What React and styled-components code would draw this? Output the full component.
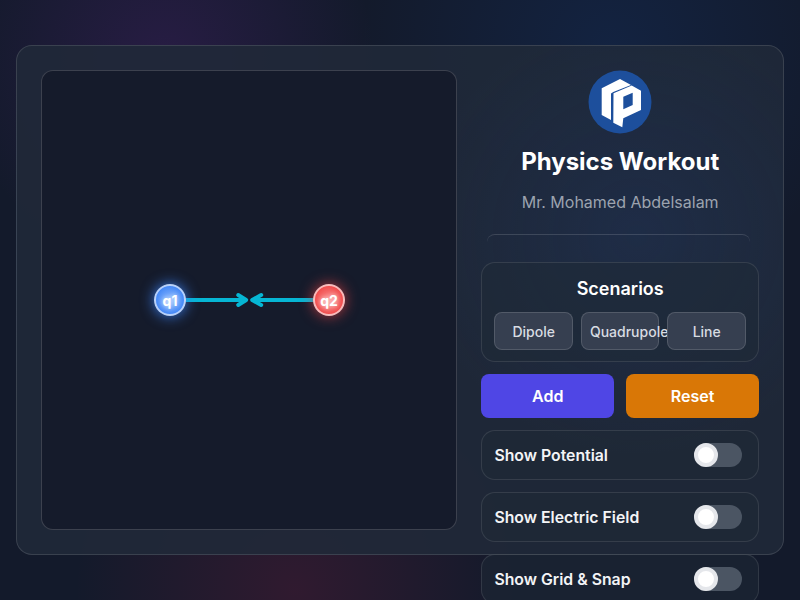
import React from 'react';
import styled, { createGlobalStyle } from 'styled-components';

const Global = createGlobalStyle`
  * { box-sizing: border-box; }
  html, body { margin: 0; height: 100%; overflow: hidden; }
  body {
    font-family: Inter, "Liberation Sans", sans-serif;
    color: #fff;
    background-color: #131a2b;
    background-image:
      radial-gradient(circle 210px at 165px 60px, rgba(140, 40, 190, 0.17), transparent),
      radial-gradient(circle 250px at 610px 50px, rgba(19, 90, 200, 0.14), transparent),
      radial-gradient(circle 220px at 295px 590px, rgba(200, 26, 70, 0.16), transparent);
  }
  #root { height: 100%; }
`;

const Page = styled.div`
  height: 100vh;
  display: flex;
  align-items: center;
  justify-content: center;
  padding: 0 16px;
`;

const Panel = styled.main`
  width: 100%;
  height: 510px;
  display: grid;
  grid-template-columns: 3fr 2fr;
  grid-template-rows: minmax(0, 1fr);
  gap: 24px;
  padding: 24px;
  border: 1px solid rgba(255, 255, 255, 0.12);
  border-radius: 16px;
  background:
    radial-gradient(circle 220px at 620px 190px, rgba(30, 64, 130, 0.2), transparent),
    rgba(32, 41, 56, 0.9);
`;

const Canvas = styled.section`
  position: relative;
  border: 1px solid rgba(255, 255, 255, 0.17);
  border-radius: 12px;
  background: #151b2b;
`;

const ArrowLayer = styled.svg`
  position: absolute;
  left: 0;
  top: 0;
  width: 100%;
  height: 100%;
`;

const Charge = styled.div`
  position: absolute;
  left: ${p => p.$x}px;
  top: ${p => p.$y}px;
  width: 32px;
  height: 32px;
  transform: translate(-50%, -50%);
  display: flex;
  align-items: center;
  justify-content: center;
  border-radius: 50%;
  border: 2px solid rgba(255, 255, 255, 0.62);
  background: ${p => p.$positive
    ? 'radial-gradient(circle at 50% 50%, #fb8f8f, #ef4444 80%)'
    : 'radial-gradient(circle at 50% 50%, #8db9fd, #3b82f6 80%)'};
  box-shadow: 0 0 14px ${p => p.$positive ? 'rgba(239, 68, 68, 0.75)' : 'rgba(59, 130, 246, 0.95)'};
  font-size: 14px;
  font-weight: 700;
  color: #fff;
  text-shadow: 0 0 5px rgba(255, 255, 255, 0.85);
`;

const Sidebar = styled.aside`
  display: flex;
  flex-direction: column;
  gap: 12px;
  min-width: 0;
`;

const Brand = styled.header`
  flex: none;
  display: flex;
  flex-direction: column;
  align-items: center;
  height: 180px;
`;

const Logo = styled.svg`
  flex: none;
  width: 64px;
  height: 64px;
  display: block;
`;

const Title = styled.h1`
  margin: 12px 0 0;
  font-size: 24px;
  line-height: 32px;
  font-weight: 700;
  color: #fff;
`;

const Subtitle = styled.p`
  margin: 12px 0 0;
  font-size: 16px;
  line-height: 24px;
  color: #9ca3af;
`;

const Divider = styled.div`
  align-self: stretch;
  margin: 20px 9px 0 6px;
  height: 16px;
  flex: none;
  border-top: 1px solid rgba(255, 255, 255, 0.14);
  border-radius: 16px;
`;

const Card = styled.section`
  flex: none;
  border: 1px solid rgba(255, 255, 255, 0.1);
  border-radius: 14px;
  background: rgba(31, 41, 55, 0.55);
`;

const ScenarioCard = styled(Card)`
  height: 100px;
  padding: 12px;
  display: flex;
  flex-direction: column;
  align-items: center;
`;

const CardTitle = styled.h2`
  margin: 0 0 9px;
  font-size: 18px;
  line-height: 28px;
  font-weight: 600;
  color: #fff;
`;

const ScenarioRow = styled.div`
  align-self: stretch;
  display: grid;
  grid-template-columns: 1fr 1fr 1fr;
  gap: 8px;
`;

const ScenarioButton = styled.button`
  height: 38px;
  min-width: 0;
  padding: 0 8px;
  font: 500 14px Inter, sans-serif;
  color: #d8dce2;
  white-space: nowrap;
  text-align: center;
  background: #363f50;
  border: 1px solid rgba(255, 255, 255, 0.14);
  border-radius: 8px;
`;

const ActionRow = styled.div`
  flex: none;
  display: grid;
  grid-template-columns: 1fr 1fr;
  gap: 12px;
`;

const ActionButton = styled.button`
  height: 44px;
  font: 600 16px Inter, sans-serif;
  color: #fff;
  background: ${p => p.$color};
  border: 0;
  border-radius: 8px;
`;

const ToggleRow = styled(Card)`
  height: 50px;
  padding: 0 16px 0 12px;
  display: flex;
  align-items: center;
  justify-content: space-between;
  font-size: 15.800px;
  font-weight: 600;
  color: #f3f4f6;
`;

const Track = styled.span`
  position: relative;
  width: 48px;
  height: 24px;
  border-radius: 12px;
  background: #4b5563;
`;

const Knob = styled.span`
  position: absolute;
  left: 0;
  top: 0;
  width: 24px;
  height: 24px;
  border-radius: 50%;
  background: #fff;
  border: 4px solid #e5e7eb;
`;

const Toggle = ({ label }) => (
  <ToggleRow>
    <span>{label}</span>
    <Track><Knob /></Track>
  </ToggleRow>
);

export default function App() {
  return (
    <>
      <Global />
      <Page>
        <Panel>
          <Canvas>
            <ArrowLayer viewBox="0 0 414 458">
              <g fill="none" stroke="#06b6d4" strokeWidth="4" strokeLinecap="round" strokeLinejoin="round">
                <path d="M144 229H203" />
                <path d="M196 224L204 229L196 234" />
                <path d="M271 229H211" />
                <path d="M219 224L210 229L219 234" />
              </g>
            </ArrowLayer>
            <Charge $x={128} $y={229}>q1</Charge>
            <Charge $x={287} $y={229} $positive>q2</Charge>
          </Canvas>
          <Sidebar>
            <Brand>
              <Logo viewBox="0 0 64 64">
                <circle cx="32" cy="32" r="31.500" fill="#1d4f9c" />
                <path fill="#fff" d="M13.700 18.300L32 9L43 15L25.300 22L23 23.500V50L13.700 45Z" />
                <path fill="#fff" fillRule="evenodd" d="M25.500 23.300L43.700 15.500L53 20.700V40L35.300 48.300L34.300 57.300L25.300 52.700ZM35.300 26.700V39.300L44.700 35V22.700Z" />
              </Logo>
              <Title>Physics Workout</Title>
              <Subtitle>Mr. Mohamed Abdelsalam</Subtitle>
              <Divider />
            </Brand>
            <ScenarioCard>
              <CardTitle>Scenarios</CardTitle>
              <ScenarioRow>
                <ScenarioButton>Dipole</ScenarioButton>
                <ScenarioButton>Quadrupole</ScenarioButton>
                <ScenarioButton>Line</ScenarioButton>
              </ScenarioRow>
            </ScenarioCard>
            <ActionRow>
              <ActionButton $color="#4f46e5">Add</ActionButton>
              <ActionButton $color="#d97706">Reset</ActionButton>
            </ActionRow>
            <Toggle label="Show Potential" />
            <Toggle label="Show Electric Field" />
            <Toggle label="Show Grid &amp; Snap" />
          </Sidebar>
        </Panel>
      </Page>
    </>
  );
}
